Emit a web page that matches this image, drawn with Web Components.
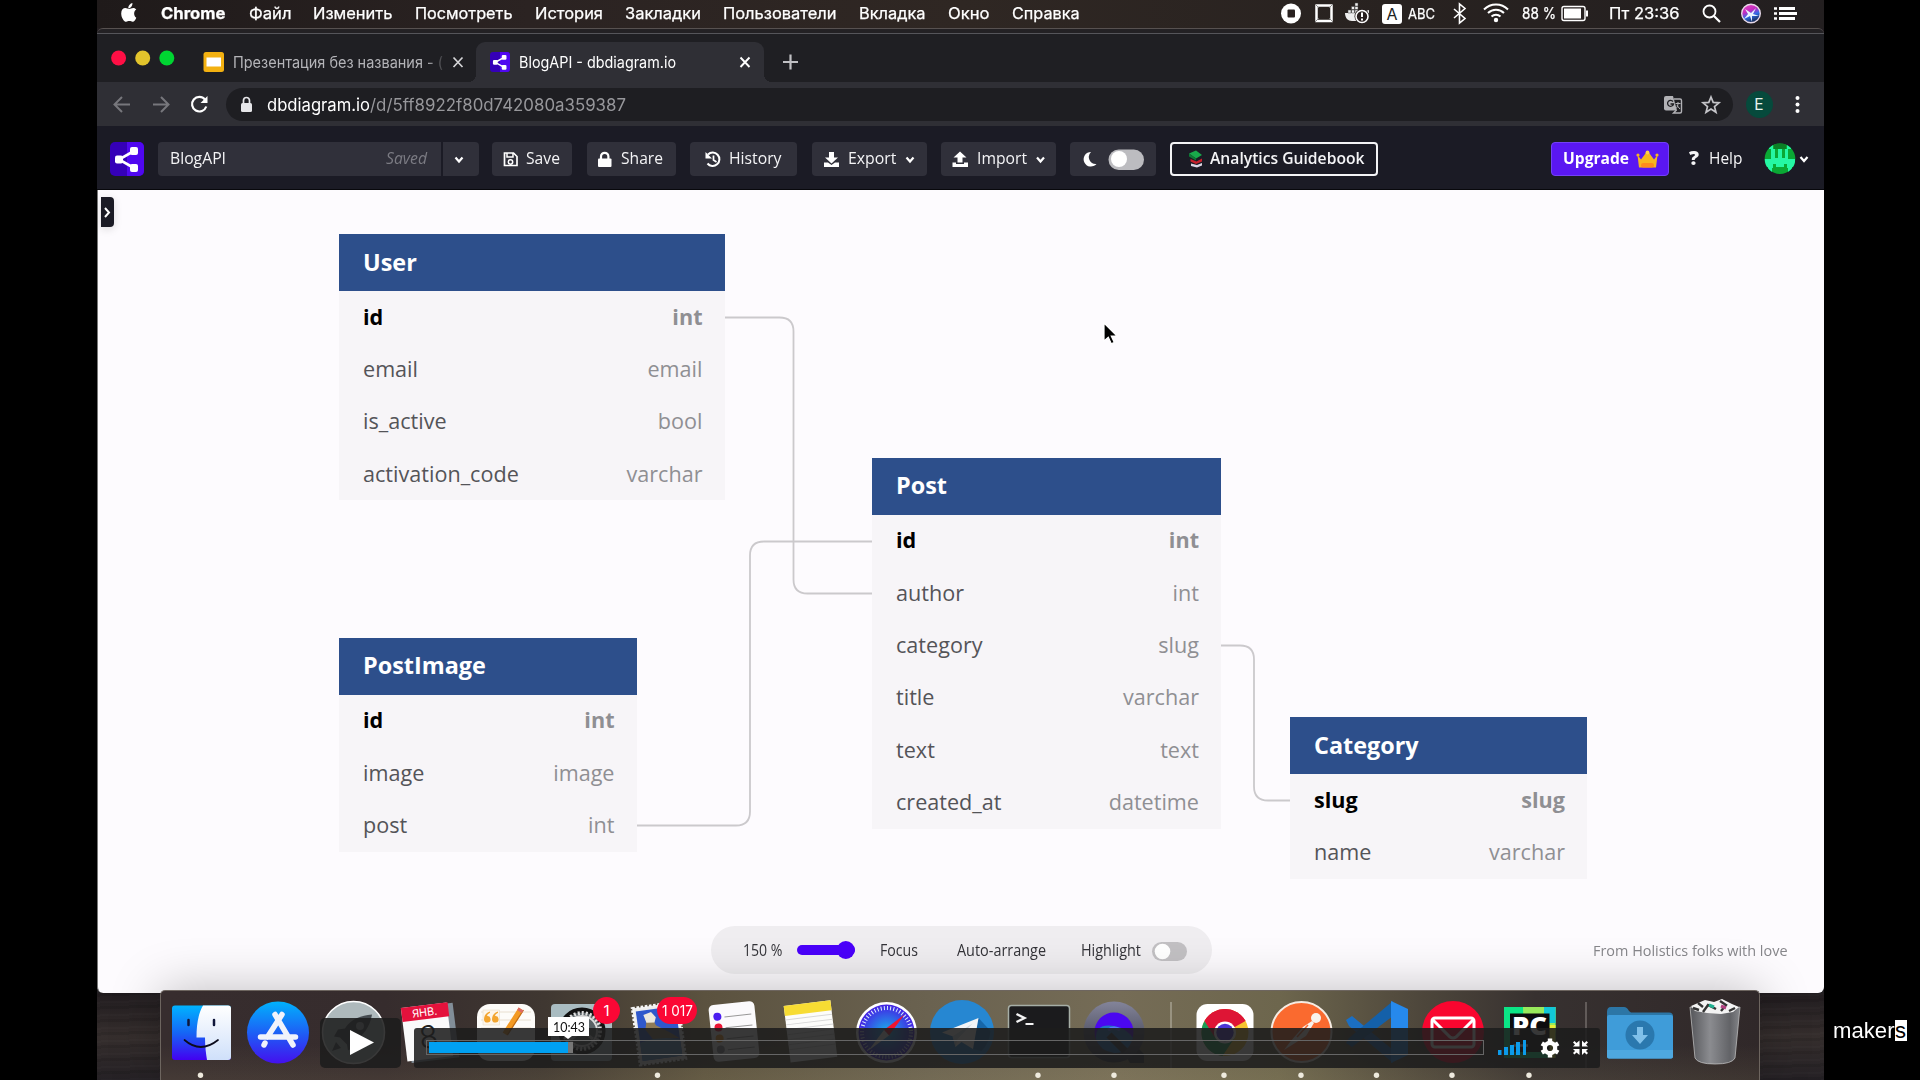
<!DOCTYPE html>
<html lang="ru">
<head>
<meta charset="utf-8">
<title>BlogAPI - dbdiagram.io</title>
<style>
html,body{margin:0;background:#000;width:1920px;height:1080px;overflow:hidden}
body{display:flex;font-family:"Open Sans","Noto Sans",sans-serif}
</style>
</head>
<body>
<mac-desktop></mac-desktop>
<side-brand></side-brand>
<script>
/* ---------- helpers ---------- */
const define = (name, css, html, after) => customElements.define(name, class extends HTMLElement {
  constructor(){ super(); this.attachShadow({mode:'open'}); }
  connectedCallback(){
    this.shadowRoot.innerHTML = `<style>:host{display:block;box-sizing:border-box}*{box-sizing:border-box}svg{display:block;flex:none}${css}</style>` + (typeof html==='function' ? html(this) : html);
    if (after) after(this);
  }
});
/* items carry their start and width; the gap to the previous item becomes a margin */
const row = (start, items) => { let c=start; return items.map(i=>{ const m=i.x-c; c=i.x+i.w; return i.html(m); }).join(''); };
const T = (x,w,text,style='') => ({x,w,html:m=>`<fit-text w="${w}" style="margin-left:${m}px;${style}">${text}</fit-text>`});
const I = (x,w,y,h,svg) => ({x,w,html:m=>`<svg style="margin-left:${m}px" width="${w}" height="${h}" viewBox="${x} ${y} ${w} ${h}">${svg}</svg>`});
const B = (x,w,cls,items) => ({x,w,html:m=>`<div class="${cls}" style="margin-left:${m}px;width:${w}px">${row(x,items)}</div>`});

/* text drawn to a set width */
define('fit-text', `:host{flex:none;white-space:nowrap}span{display:inline-block;transform-origin:0 50%}`, '<span><slot></slot></span>', el=>{
  const w=+el.getAttribute('w'); el.style.width=w+'px';
  const s=el.shadowRoot.querySelector('span'), n=s.getBoundingClientRect().width;
  if(n) s.style.transform=`scaleX(${w/n})`;
});

/* ---------- menu bar ---------- */
define('menu-bar', `
:host{height:28px;display:flex;align-items:center;color:#fff;font:400 16px Inter,Roboto,sans-serif;-webkit-text-stroke:.25px #fff;
background:linear-gradient(90deg,#1f1a1a,#2b2322 25%,#2f2723 50%,#282220 75%,#231f20)}
fit-text{margin-bottom:2px}
.kb{width:20px;height:20px;margin-bottom:1px;background:#fff;border-radius:3px;color:#222;display:flex;align-items:center;justify-content:center;font-size:16px;-webkit-text-stroke:0}`, ()=>row(97,[
 I(120,18,0,28,`<path fill="#fff" d="M132.4 3c.2 1.700-.5 3-1.300 3.900-.8.9-1.800 1.400-2.800 1.300-.1-1.300.5-2.700 1.300-3.500.8-.9 1.900-1.500 2.800-1.700zM136.300 17.800c-.8 2-2 4-3.700 4-1.200 0-1.600-.7-3.200-.7s-2 .7-3.200.7c-2 0-5-4.100-5-8.400 0-3.500 2-5.300 4.200-5.300 1.500 0 2.500.9 3.800.9 1.200 0 2.300-1 4.100-1 1.200 0 2.300.6 3 1.600-3 1.700-2.700 6.500 0 8.200z"/>`),
 T(161,64.500,'Chrome','font-weight:700'),T(248.500,42.500,'Файл'),T(313,79.500,'Изменить'),T(415,97.500,'Посмотреть'),
 T(535,68,'История'),T(625,76,'Закладки'),T(723,113.500,'Пользователи'),T(859,66.500,'Вкладка'),T(948,41.500,'Окно'),T(1011.500,67.500,'Справка'),
 I(1280,92,0,28,`<circle cx="1291" cy="13.500" r="10" fill="#fff"/><rect x="1287.500" y="9.500" width="7.500" height="8" rx="1" fill="#28201f"/>
 <rect x="1316.500" y="5.500" width="15" height="15.500" fill="none" stroke="#fff" stroke-width="2.500"/><path d="M1315 4l4 4M1333 4l-4 4M1315 22l4-4M1333 22l-4-4" stroke="#777" stroke-width=".8"/>
 <path fill="#eee" d="M1345 13h14v-2h7l3-1v3l-5 8h-12c-4 0-7-3-7-8z"/><path fill="#eee" d="M1348 10h3v3h-3zM1351.500 10h3v3h-3zM1355 10h3v3h-3zM1351.500 6.500h3v3h-3zM1355 6.500h3v3h-3zM1355 3h3v3h-3z" stroke="#444" stroke-width=".5"/>
 <circle cx="1362" cy="16.500" r="7.500" fill="#28201f" /><circle cx="1362" cy="16.500" r="6" fill="none" stroke="#fff" stroke-width="1.600"/><path d="M1362 12.500v4.500M1362 18.500v2" stroke="#fff" stroke-width="2"/>`),
 {x:1382,w:20,html:m=>`<div class="kb" style="margin-left:${m}px">A</div>`},
 T(1408,27,'ABC','font-size:14px'),
 I(1452,58,0,28,`<path d="M1454 9l11 9.500-5.500 4.500V4l5.500 4.500-11 9.500" fill="none" stroke="#fff" stroke-width="1.600"/>
 <g fill="none" stroke="#fff" stroke-width="2"><path d="M1484 9.500a17 17 0 0 1 24 0M1488 13a11.500 11.500 0 0 1 16 0M1491.500 16.500a6.500 6.500 0 0 1 9 0"/></g><circle cx="1496" cy="20" r="2.200" fill="#fff"/>`),
 T(1522,34,'88 %','font-size:15.500px'),
 I(1560,30,0,28,`<rect x="1562" y="6.500" width="23" height="14" rx="2" fill="none" stroke="#fff" stroke-width="1.400"/><rect x="1564" y="8.500" width="17" height="10" fill="#fff"/><path d="M1587 10.500v6" stroke="#fff" stroke-width="2"/>`),
 T(1608.500,70.500,'Пт 23:36'),
 I(1700,100,0,28,`<circle cx="1709.500" cy="11.500" r="6" fill="none" stroke="#fff" stroke-width="1.800"/><path d="M1714 16l6 6" stroke="#fff" stroke-width="2.200"/>
 <defs><linearGradient id="si" x2=".4" y2="1"><stop offset="0" stop-color="#f04bc0"/><stop offset=".45" stop-color="#c02bc0"/><stop offset=".7" stop-color="#2f6de8"/><stop offset="1" stop-color="#173060"/></linearGradient></defs>
 <circle cx="1751" cy="13.500" r="9.300" fill="url(#si)" stroke="#e7d8e8" stroke-width="1.400"/><path d="M1745 9l6 4 5-5-3 6 6 2-7 0 0 6-2-6-6 3 4-5z" fill="#e8f4ff"/>
 <path d="M1779 8.500h16M1779 13.500h18M1779 18.500h16" stroke="#fff" stroke-width="2.800"/><path d="M1774 8.500h3M1774 13.500h3M1774 18.500h3" stroke="#fff" stroke-width="2.500"/>`)
]));

/* ---------- browser chrome ---------- */
const logo = (x,y,w,h)=>`<svg x="${x}" y="${y}" width="${w}" height="${h}" viewBox="0 0 34 34" preserveAspectRatio="none"><rect width="34" height="34" rx="5" fill="#3500b8"/><path d="M17 0h12a5 5 0 0 1 5 5v24a5 5 0 0 1-5 5H17z" fill="#5008f0"/><path d="M24 9L9 17.500 24 26" fill="none" stroke="#fff" stroke-width="2.600"/><rect x="20" y="5" width="8" height="8" rx="2" fill="#fff"/><rect x="20" y="22" width="8" height="8" rx="2" fill="#fff"/><rect x="5" y="13.500" width="8" height="8" rx="2" fill="#fff"/></svg>`;
define('tab-strip', `
:host{height:49px;display:flex;align-items:flex-start;background:#1f1f23;border-top:1px solid #55555a;color:#fff;font:400 15.500px Inter,Roboto,sans-serif}
.r{display:flex;height:40px;align-items:center;margin-top:8px}
.fade{color:#b4b4b8;-webkit-mask:linear-gradient(90deg,#000 92%,#0003);mask:linear-gradient(90deg,#000 92%,#0003)}
.act{display:flex;align-items:center;height:40px;background:#2f2f35;border-radius:9px 9px 0 0;position:relative}
.act:before,.act:after{content:"";position:absolute;bottom:0;width:8px;height:8px}
.act:before{left:-8px;background:radial-gradient(circle at 0 0,transparent 8px,#2f2f35 8px)}
.act:after{right:-8px;background:radial-gradient(circle at 100% 0,transparent 8px,#2f2f35 8px)}`,
()=>`<div class="r">`+row(97,[
 I(108,70,39,40,`<circle cx="118.600" cy="55" r="7.500" fill="#ff0f45"/><circle cx="142.700" cy="55" r="7.500" fill="#e2c42c"/><circle cx="166.800" cy="55" r="7.500" fill="#00d532"/>`),
 I(203,22,42,40,`<rect x="203.500" y="52" width="20.500" height="20" rx="2.500" fill="#f3b111"/><rect x="206.500" y="57.500" width="14.500" height="9" fill="#fff"/>`),
 {x:232.500,w:210,html:m=>`<fit-text class="fade" w="210" style="margin-left:${m}px">Презентация без названия - (</fit-text>`},
 I(450,16,42,40,`<path d="M453.500 57.500l9 9.500M462.500 57.500l-9 9.500" stroke="#d5d5d8" stroke-width="1.700"/>`),
 B(476,288,'act',[
  I(490,20,42,40,logo(490,52,20,20)),
  T(519,157,'BlogAPI - dbdiagram.io'),
  I(737,16,42,40,`<path d="M740.500 57.500l9 9.500M749.500 57.500l-9 9.500" stroke="#fff" stroke-width="1.900"/>`)]),
 I(782,17,42,40,`<path d="M783 62h15M790.500 54.500v15" stroke="#c0c0c4" stroke-width="2.200"/>`)
])+`</div>`);

define('address-row', `
:host{height:44px;display:flex;align-items:center;background:#2f2f35;font:400 17px Inter,Roboto,sans-serif}
.pill{height:33px;border-radius:17px;background:#1e1e22;display:flex;align-items:center;margin-bottom:-1px}
.av{width:27px;height:27px;border-radius:50%;background:#064a3c;color:#e8f4ee;font-size:15.500px;display:flex;align-items:center;justify-content:center}`,
()=>row(97,[
 I(112,100,82,44,`<g fill="none" stroke-width="2" stroke="#77777c"><path d="M130 104.500h-15M122 97l-7.500 7.500 7.500 7.500M153 104.500h15M161 97l7.500 7.500-7.500 7.500"/><path stroke="#fff" stroke-width="2.200" d="M205 99.500a7.300 7.300 0 1 0 1.300 7"/></g><path d="M207.500 96v7h-7z" fill="#fff"/>`),
 B(226,1506.500,'pill',[
  I(240,14,88,33,`<rect x="241" y="103" width="11" height="9" rx="1.500" fill="#e6e6e9"/><path d="M243.500 103v-2.500a3 3 0 0 1 6 0v2.500" fill="none" stroke="#e6e6e9" stroke-width="1.700"/>`),
  T(266.500,103,'dbdiagram.io','color:#fff'),T(370,256,'/d/5ff8922f80d742080a359387','color:#97979b'),
  I(1662,60,88,33,`<path d="M1666 96h7l4 14.500h-11a2 2 0 0 1-2-2V98a2 2 0 0 1 2-2z" fill="#b2b2b6"/><path d="M1674 99h6a1.500 1.500 0 0 1 1.500 1.500v11a1.500 1.500 0 0 1-1.500 1.500h-6.500l3-3" fill="none" stroke="#b2b2b6" stroke-width="1.400"/><path d="M1673 101.500a3 3 0 1 0 .5 2.500h-3" fill="none" stroke="#1e1e22" stroke-width="1.300"/><path d="M1675.500 103.500h5M1678 102v1.500c0 2-1 4-2 5M1677 105.500l3 3.500" fill="none" stroke="#b2b2b6" stroke-width="1"/>
  <path d="M1711 97l2.200 5.400 5.800.4-4.500 3.800 1.500 5.700-5-3.200-5 3.200 1.500-5.700-4.500-3.800 5.800-.4z" fill="none" stroke="#c4c4c8" stroke-width="1.700"/>`)]),
 {x:1745.500,w:27,html:m=>`<div class="av" style="margin-left:${m}px">E</div>`},
 I(1793,10,82,44,`<g fill="#fff"><circle cx="1797.500" cy="98" r="2"/><circle cx="1797.500" cy="104.500" r="2"/><circle cx="1797.500" cy="111" r="2"/></g>`)
]));

/* ---------- dbdiagram header ---------- */
const chev=(x,y)=>`<path d="M${x-3.500} ${y-2}l3.500 4 3.500-4" fill="none" stroke="#fff" stroke-width="2.200"/>`;
define('app-header', `
:host{height:64px;display:flex;align-items:center;background:#1b1b25;border-bottom:1px solid #08080c;color:#f4f4f6;font:500 15.500px "Open Sans",sans-serif;padding-top:2px}
.b{height:34px;border-radius:4px;background:#30303a;display:flex;align-items:center}
.b>fit-text,:host>fit-text{margin-bottom:1px}
.l{border-radius:4px 0 0 4px}.rr{border-radius:0 4px 4px 0}
.o{background:none;border:2px solid #f4f4f6}
.o>*:first-child{margin-left:16px!important}
.u{background:#5a17f2;border:1px solid #7341f5}`,
()=>row(97,[
 I(110,34,142,34,logo(110,142,34,34)),
 B(158,282.500,'b l',[T(169.500,56,'BlogAPI'),T(386,41,'Saved','font-style:italic;font-weight:400;color:#7b7b83')]),
 B(442.500,36,'b rr',[I(449,20,142,34,chev(459,159.500))]),
 B(492,80,'b',[I(502,18,142,34,`<path d="M504.500 153h9l3.500 3.500v9h-12.500z" fill="none" stroke="#fff" stroke-width="1.700"/><path d="M507 153v4h6v-4" fill="none" stroke="#fff" stroke-width="1.500"/><circle cx="510.500" cy="162" r="2.200" fill="none" stroke="#fff" stroke-width="1.500"/>`),T(526,34,'Save')]),
 B(587,89,'b',[I(597,16,142,34,`<rect x="598" y="158.500" width="13.500" height="8.500" rx="1" fill="#fff"/><path d="M601 159v-2.500a3.700 3.700 0 0 1 7.400 0v2.500" fill="none" stroke="#fff" stroke-width="2.200"/>`),T(621,42,'Share')]),
 B(690,107,'b',[I(704,18,142,34,`<path d="M708 154.500a6.700 6.700 0 1 1-.5 9" fill="none" stroke="#fff" stroke-width="2"/><path d="M705.500 152v6.500h6.500z" fill="#fff"/><path d="M713.500 155.500v4.500l3 2" fill="none" stroke="#fff" stroke-width="1.700"/>`),T(729,52.500,'History')]),
 B(812,114.500,'b',[I(823,17,142,34,`<path d="M829 152h5v5.500h4l-6.500 6-6.500-6h4z" fill="#fff"/><path d="M824 162.500h4l3.500 2.500 3.500-2.500h4v4.500h-15z" fill="#fff"/>`),T(848,48.500,'Export'),I(902,16,142,34,chev(910,159.500))]),
 B(941,115,'b',[I(952,17,142,34,`<path d="M957.500 162.500h5v-5h4l-6.500-6-6.500 6h4z" fill="#fff"/><path d="M952.500 162.500h3.500v1.500h8v-1.500h4v4.500h-15.500z" fill="#fff"/>`),T(976.500,50,'Import'),I(1032,16,142,34,chev(1040.500,159.500))]),
 B(1070,86,'b',[I(1080,70,142,34,`<path d="M1091 152a7.300 7.300 0 1 0 5.500 12a7 7 0 0 1-5.500-12z" fill="#fff"/><rect x="1108.500" y="149.500" width="35.500" height="20.500" rx="10.200" fill="#bcbcc0"/><circle cx="1119" cy="159" r="8" fill="#fff"/>`)]),
 {x:1170,w:208,html:m=>`<div class="b o" style="margin-left:${m}px;width:208px">`+row(1188,[
   I(1188,16,144,30,`<path d="M1189 153.500l7-3 6 4.500-6 3.500z" fill="#19a84b"/><path d="M1189 153.500l7 5v2l-7-4z" fill="#0c7a34"/><path d="M1190.500 159l6 2.500 5.500-3v3l-6 2.500-5.500-2.500z" fill="#c8202c"/><path d="M1191 163.500l6 1.500 5-2v2.500l-5 2-6-1.500z" fill="#dcd6e4"/>`),
   T(1210,154.500,'Analytics Guidebook','font-weight:600')])+`</div>`},
 B(1551,118,'b u',[T(1562,66,'Upgrade','font-weight:700;color:#fff'),
   I(1634,24,142,34,`<path d="M1636.500 155l3.500 4.500 3-4 3-4.500 1 0 3 4.500 3 4 3.500-4.500-1.500 12.500h-17z" fill="#f8b61e"/><circle cx="1637" cy="155" r="1.600" fill="#f8b61e"/><circle cx="1656" cy="155" r="1.600" fill="#f8b61e"/><circle cx="1646.500" cy="152.500" r="1.900" fill="#ffd04a"/><rect x="1640" y="163" width="13" height="4.500" rx="2.200" fill="#ff8a1c"/>`)]),
 T(1688.500,10,'?','font:800 19px Open Sans,sans-serif'),T(1708.500,33.500,'Help'),
 I(1764,46,142,32,`<clipPath id="av"><circle cx="1780" cy="157.800" r="15.300"/></clipPath><g clip-path="url(#av)"><rect x="1764" y="142" width="32" height="32" fill="#0aa834"/><path fill="#0b7f26" d="M1774 142h12v6h-12z"/><path fill="#25f7a4" d="M1769 144h4v4h2v9h3v-9h4v9h3v-9h2v-4h4v4h-3v10h7v8h-3v5h-4v-4h-16v4h-4v-5h-4v-8h7v-10h-2z"/><path fill="#0aa834" d="M1773 163h3v3h8v-3h3v5h-14z"/></g>${chev(1804,158)}`)
]));

/* ---------- diagram ---------- */
define('db-table', `
:host{position:absolute;background:#f7f5f8;font:400 21.600px "Open Sans",sans-serif}
h3{margin:0;height:57px;padding:0 24px 2px;display:flex;align-items:center;background:#2d4f8b;color:#fff;font:700 23.400px "Open Sans",sans-serif}
.f{height:52.350px;padding:0 22px 2px 24px;display:flex;align-items:center;justify-content:space-between;color:#545458}
.f b{font-weight:400;color:#8f8f93}
.f.k{font-weight:700;color:#000}.f.k b{font-weight:700}`,
el=>`<h3>${el.getAttribute('name')}</h3>`+el.getAttribute('fields').split(',').map((f,i)=>{const [a,b]=f.split(':');return `<div class="f${i?'':' k'}"><span>${a}</span><b>${b}</b></div>`}).join(''),
el=>{ el.style.cssText=`left:${el.getAttribute('x')-97}px;top:${el.getAttribute('y')-190}px;width:${el.getAttribute('w')}px`; });

define('view-controls', `
:host{position:absolute;left:613.500px;top:736px;width:501.500px;height:48px;border-radius:24px;background:#efedf0;display:flex;align-items:center;color:#333338;font:400 15.500px "Open Sans",sans-serif}
fit-text{margin-bottom:1px}`,
()=>row(710.500,[T(743,39.500,'150 %'),I(795,62,926,48,`<rect x="797" y="945" width="58" height="10" rx="5" fill="#4a00fa"/><circle cx="845.800" cy="950" r="9" fill="#4a00fa"/>`),
 T(880,38,'Focus'),T(956.500,89,'Auto-arrange'),T(1081,60,'Highlight'),
 I(1150,40,926,48,`<rect x="1152" y="942" width="35" height="19" rx="9.500" fill="#c2c0c3"/><circle cx="1162.500" cy="951.500" r="7.800" fill="#fff"/>`)]));

define('diagram-canvas', `
:host{height:803px;background:#fdfbfe;position:relative;border-radius:0 0 6px 6px;overflow:hidden;border-left:1px solid #777}
.wires{position:absolute;left:-1px;top:0}
.layer{position:absolute;left:-1px;top:0;width:1727px;height:803px}
.exp{position:absolute;left:4px;top:7px;width:13px;height:30px;background:#1b1b25;border-radius:0 4px 4px 0;box-shadow:0 2px 8px #0002}
.by{position:absolute;right:36.500px;top:750px;color:#87878b;font:400 15px "Open Sans",sans-serif}
.cur{position:absolute;left:1001.500px;top:128.500px}`,
`<div class="layer"><svg class="wires" style="left:0" width="1727" height="803" viewBox="97 190 1727 803"><g fill="none" stroke="#cbc9cc" stroke-width="1.800">
<path d="M724 317.500h55.500q14 0 14 14v248q0 14 14 14h65"/><path d="M873 541.500h-109q-14 0-14 14v256q0 14-14 14h-100"/><path d="M1221 645.500h19q14 0 14 14v127q0 14 14 14h22"/></g></svg>
<db-table name="User" x="339" y="234" w="385.500" fields="id:int,email:email,is_active:bool,activation_code:varchar"></db-table>
<db-table name="Post" x="872" y="457.500" w="349" fields="id:int,author:int,category:slug,title:varchar,text:text,created_at:datetime"></db-table>
<db-table name="PostImage" x="339" y="637.500" w="297.500" fields="id:int,image:image,post:int"></db-table>
<db-table name="Category" x="1290" y="717" w="297" fields="slug:slug,name:varchar"></db-table>
<div class="exp"><svg width="13" height="30"><path d="M4 11l4 4.500-4 4.500" fill="none" stroke="#fff" stroke-width="2"/></svg></div>
<view-controls></view-controls>
<fit-text class="by" w="194.500">From Holistics folks with love</fit-text>
<svg class="cur" width="22" height="30" viewBox="1099 319 22 30"><path d="M1104 323v18l4.300-3.800 3 6.500 3-1.300-3-6.300h5.700z" fill="#000" stroke="#fff" stroke-width="1.200"/></svg></div>`);

/* ---------- dock ---------- */
const ART = {
finder:`<defs><linearGradient id="f" x2="0" y2="1"><stop offset="0" stop-color="#00b4ff"/><stop offset=".5" stop-color="#1566f5"/><stop offset="1" stop-color="#4300f0"/></linearGradient><linearGradient id="f2" x2="0" y2="1"><stop offset="0" stop-color="#fff"/><stop offset="1" stop-color="#cfe0fa"/></linearGradient></defs><rect x="173" y="1005.500" width="59" height="54.500" rx="3" fill="url(#f)"/><path d="M204 1005.500h25a3 3 0 0 1 3 3v48.500a3 3 0 0 1-3 3h-21c-1-6-2-13-2-22.500h-8.500c0-14 2-24 6.500-32z" fill="url(#f2)"/><path d="M189.500 1020v5M215 1020v5" stroke="#10163a" stroke-width="2.500" stroke-linecap="round"/><path d="M185.500 1040q16 14 33.500 0" fill="none" stroke="#0c0c1c" stroke-width="1.700" stroke-linecap="round"/>`,
store:`<defs><linearGradient id="s" x2="0" y2="1"><stop offset="0" stop-color="#00b2fc"/><stop offset=".55" stop-color="#2058f5"/><stop offset="1" stop-color="#4410ee"/></linearGradient></defs><circle cx="279" cy="1032.500" r="31" fill="url(#s)"/><g stroke="#f1f3fb" stroke-width="5.500" stroke-linecap="round"><path d="M276 1014.500l18 30.500M283 1014.500l-14.500 22.500M266 1043l-1 2M261.500 1037h35"/></g>`,
launch:`<circle cx="354.500" cy="1032.500" r="31" fill="#aeb9bc" stroke="#fff" stroke-width="1.500"/><path d="M373 1014.500c-13 1-22 6-27 14l-7 1-4 7 6 1 7 7 1 6 7-4 1-7c8-5 14-13 16-25zM337 1042l-4 9 9-3z" fill="#454b50"/><circle cx="361" cy="1026" r="4" fill="#a5aeb2"/>`,
cal:`<g transform="rotate(-7 428 1032)"><rect x="409" y="1006" width="48" height="55" fill="#828e98"/><rect x="405" y="1005" width="46" height="54" fill="#fafafa"/><rect x="405" y="1005" width="47" height="14" fill="#e4123c"/><text x="428" y="1016" text-anchor="middle" font-family="Inter" font-size="11" textLength="25" lengthAdjust="spacingAndGlyphs" fill="#fff">ЯНВ.</text><text x="429" y="1048" text-anchor="middle" font-family="Inter" font-size="31" font-weight="300" fill="#222">8</text></g>`,
pages:`<rect x="478" y="1004" width="58" height="57" rx="13" fill="#fdfcf9"/><path d="M482 1012h50M482 1020h50M482 1028h50" stroke="#e8dfd0"/><rect x="484" y="1010" width="16.500" height="15" fill="#fdf6ea" stroke="#eadcc6" stroke-width=".6"/><path d="M491 1011.500q-6 2-6 8a3.300 3.300 0 1 0 3-3.500q0-2 3-3.300zM499 1011.500q-6 2-6 8a3.300 3.300 0 1 0 3-3.500q0-2 3-3.300z" fill="#f3a52e"/><path d="M522 1009l-16 25" stroke="#f39a23" stroke-width="5.500"/><path d="M524.500 1010l-16 25" stroke="#c06a10" stroke-width="1.200"/><path d="M522 1009l-1.500 2.500" stroke="#dc6a66" stroke-width="5.500"/>`,
settings:`<rect x="552" y="1004" width="61" height="57" rx="4" fill="#a9bcc1"/><circle cx="583" cy="1031" r="21" fill="#5f676b" stroke="#111" stroke-width="5"/><circle cx="583" cy="1031" r="18" fill="none" stroke="#dedede" stroke-width="4" stroke-dasharray="2 2"/><circle cx="583" cy="1031" r="15" fill="#5a6265" stroke="#ddd" stroke-width="2"/><path d="M583 1031v-13M583 1031l11 8M583 1031l-11 8" stroke="#bbb" stroke-width="3"/>`,
stamp:`<g transform="rotate(-8 660 1033)"><rect x="637" y="1005" width="46" height="57" fill="#eee" stroke="#f5f5f5" stroke-width="3" stroke-dasharray="2.600 1.600"/><rect x="640" y="1008.500" width="40" height="50" fill="#2f58cc"/><path d="M640 1040l20-3 20 5v16.500h-40z" fill="#5c91c4"/><path d="M648 1013l7 3 3 9 13 9 9 7-14-2-13-1-6-10 2-8z" fill="#8f7b58"/><path d="M647 1013l8-2 4 6-2 5-8-1z" fill="#ece8dd"/></g>`,
remind:`<g transform="rotate(-6 735 1031.500)"><rect x="712" y="1003" width="46" height="57" rx="5" fill="#fbfafc"/><g stroke="#999" stroke-width="1"><path d="M727 1016h27M727 1027h27M727 1038h27M727 1049h27"/></g><circle cx="720" cy="1015" r="4" fill="#4b1df0"/><circle cx="720" cy="1026" r="4" fill="#ea1535"/><circle cx="720" cy="1037" r="4" fill="#f09018"/><circle cx="720" cy="1048" r="4" fill="#8b8b90"/></g>`,
notes:`<g transform="rotate(-7 811 1031.500)"><rect x="788" y="1003" width="47" height="57" fill="#fcfcfa"/><rect x="788" y="1003" width="47" height="10" fill="#f7dc33"/><path d="M788 1017h47M788 1022h47M788 1027h47M788 1032h47M788 1037h47M788 1042h47M788 1047h47" stroke="#d7d7d7"/></g>`,
safari:`<defs><radialGradient id="sf"><stop offset="0" stop-color="#19b4ea"/><stop offset="1" stop-color="#4422e4"/></radialGradient></defs><circle cx="887.500" cy="1032.500" r="30.500" fill="#fff"/><circle cx="887.500" cy="1032.500" r="28" fill="url(#sf)"/><circle cx="887.500" cy="1032.500" r="24.500" fill="none" stroke="#dcecff" stroke-width="4" stroke-dasharray="1 2.200"/><path d="M905.500 1014.500l-15.500 21-5-5.500z" fill="#f01430"/><path d="M869.500 1050.500l15.500-20.500 5 5.500z" fill="#eee"/>`,
tele:`<circle cx="963" cy="1032" r="32" fill="#2687d2"/><path d="M979.500 1018l12 13q-1 12-9 20l-9-2z" fill="#1766a8"/><path d="M943 1032.500l36.500-14.500-5.500 31-11.500-7-6 5-2.500-10.500z" fill="#f3f4f6"/><path d="M953.500 1036.500l20-13-15 15.500-2 8z" fill="#ccd8e3"/>`,
term:`<rect x="1009.500" y="1005.500" width="61" height="52" rx="3" fill="#1b1b1d" stroke="#a6aea6" stroke-width="1.500"/><path d="M1017.500 1014l8 4-8 4" fill="none" stroke="#f4f4f4" stroke-width="2.400"/><path d="M1026.500 1024h8" stroke="#f4f4f4" stroke-width="2"/>`,
qt:`<defs><linearGradient id="q" x2="0" y2="1"><stop offset="0" stop-color="#83849a"/><stop offset="1" stop-color="#31323e"/></linearGradient></defs><path d="M1117 1040h14l14 14v9h-14z" fill="#34343c"/><circle cx="1115" cy="1032" r="30.500" fill="url(#q)"/><circle cx="1115" cy="1032" r="19.500" fill="#4b07f0"/><path d="M1097 1039q-1-16 18-13q12 2 19 12q-5 16-19 15q-14-2-18-14z" fill="#2272c0"/><path d="M1110 1035l16 16" stroke="#30303a" stroke-width="7"/><path d="M1109 1030q6-4 12 0" stroke="#5a74ff" stroke-width="3" fill="none"/>`,
div1:`<path d="M1172 1002v66" stroke="#a39e8d" stroke-width="1.600"/>`,
chrome:`<rect x="1197.500" y="1004" width="57" height="57" rx="11" fill="#fff"/><circle cx="1226" cy="1032.500" r="23.500" fill="#f5c430"/><path d="M1226 1032.500L1205.500 1021a23.500 23.500 0 0 1 41 0z" fill="#de1535"/><path d="M1226 1032.500h-10L1205.500 1021a23.500 23.500 0 0 0 18 35l12-18z" fill="#1c9c55"/><path d="M1226 1021h20.500a23.500 23.500 0 0 0-41 0l10 16z" fill="#de1535"/><circle cx="1226" cy="1032.500" r="11" fill="#fff"/><circle cx="1226" cy="1032.500" r="8.700" fill="#4b35d4"/>`,
postman:`<circle cx="1302.500" cy="1032" r="30" fill="#fa6a2f" stroke="#f6ece3" stroke-width="2"/><circle cx="1317" cy="1018" r="5" fill="#f8f2ec"/><path d="M1313 1021l-9 6-13 15-6 8 8-5 14-9 8-13z" fill="#f8f2ec"/><path d="M1309 1025l-11 12" stroke="#fa6a2f" stroke-width="1.500"/>`,
code:`<path d="M1347 1020l6-4 41 34v13l-44-37z" fill="#1b6fc3"/><path d="M1347 1043l6 4 41-31v-15l-44 37z" fill="#1460a9"/><path d="M1392 1001l17 8v46l-17 8z" fill="#2689ec"/>`,
mailr:`<circle cx="1454" cy="1032" r="31" fill="#f9062f"/><rect x="1433" y="1018" width="42" height="29" rx="3" fill="none" stroke="#fff" stroke-width="3"/><path d="M1434 1020l17 17q3 2 6 0l17-17" fill="none" stroke="#fff" stroke-width="3"/>`,
pc:`<rect x="1505" y="1007" width="51.500" height="51" fill="#0be586"/><path d="M1524 1007h32.500v26l-8-8h-24z" fill="#98ea5c"/><path d="M1545 1007h11.500v16h-11.500z" fill="#12c8d8"/><path d="M1550 1025h6.500v33h-6.500z" fill="#e8ee38"/><rect x="1511" y="1013.500" width="39.500" height="38.500" fill="#0c0c0e"/><text x="1513" y="1035" font-family="Open Sans" font-weight="800" font-size="25" textLength="35" lengthAdjust="spacingAndGlyphs" fill="#fff">PC</text><path d="M1514 1045.500h15" stroke="#fff" stroke-width="2.500"/>`,
div2:`<path d="M1587 1002v66" stroke="#6e6765" stroke-width="1.600"/>`,
folder:`<path d="M1608 1012q0-5 4-5h13q3 0 5 4l2 1.500h38q4 0 4 4v12h-66z" fill="#2c76a6"/><rect x="1608" y="1015" width="66" height="43.500" rx="2" fill="#3f9cd9"/><path d="M1608 1050h66v6.500a2 2 0 0 1-2 2h-62a2 2 0 0 1-2-2z" fill="#4ea8df"/><circle cx="1641" cy="1035" r="14.500" fill="#2a78ae"/><path d="M1638 1027h6v8h5l-8 9-8-9h5z" fill="#7fc0ea"/>`,
trash:`<defs><linearGradient id="tr"><stop offset="0" stop-color="#55565a"/><stop offset=".4" stop-color="#8b8c90"/><stop offset=".8" stop-color="#626367"/><stop offset="1" stop-color="#85868a"/></linearGradient></defs><path d="M1691 1007q25 9 50 0l-5 51q-3 6-20 6t-20-6z" fill="url(#tr)" stroke="#bbb" stroke-width=".8"/><path d="M1692 1006l14-6 9 2 8-3 10 5 7 3-6 5-12 2-14-1-12-2z" fill="#f3f3f3"/><path d="M1699 1003l5 4M1704 1012l5-7 8 4M1721 1001l6 4-5 6M1730 1011l6-3M1694 1008l6 2" stroke="#333" stroke-width="2.400" fill="none"/><path d="M1710 1005l5 2" stroke="#20b090" stroke-width="3"/><path d="M1722 1006l5 2" stroke="#b04080" stroke-width="3"/>`
};
const CELLS=[['finder',165,240],['store',240,316],['launch',316,392],['cal',392,468],['pages',468,544],['settings',544,624],['stamp',624,700],['remind',700,774],['notes',774,850],['safari',850,925],['tele',925,1002],['term',1002,1077],['qt',1077,1160],['div1',1160,1188],['chrome',1188,1264],['postman',1264,1340],['code',1340,1416],['mailr',1416,1492],['pc',1492,1570],['div2',1570,1600],['folder',1600,1682],['trash',1682,1750]];
const DOTS={finder:201.5,stamp:658.5,term:1039,qt:1115,chrome:1225,postman:1302,code:1377.5,mailr:1453,pc:1530};
define('dock-icon',`:host{flex:none}`,el=>{const n=el.getAttribute('name'),a=+el.getAttribute('from'),w=el.getAttribute('to')-a;
 return `<svg width="${w}" height="90" viewBox="${a} 991 ${w} 90">${ART[n]}${DOTS[n]?`<circle cx="${DOTS[n]}" cy="1075.300" r="2.700" fill="#eeeade"/>`:''}</svg>`});
define('dock-badge',`:host{position:absolute;background:#fb0735;color:#fff;border-radius:14px;height:27px;display:flex;align-items:center;justify-content:center;font:400 15px Inter,sans-serif}`,'<slot></slot>');
define('mac-dock',`
:host{margin:-3px 0 0 63px;width:1600px;height:90px;position:relative;display:flex;padding-left:3px;border-radius:5px 5px 0 0;border:1px solid #6d655f;border-bottom:0;
background:linear-gradient(180deg,transparent 60%,#c8ba8018),linear-gradient(90deg,#372d2e 0,#362c2d 14%,#3f3731 24%,#5b523f 34%,#6a6250 48%,#756c56 60%,#6d664d 70%,#4d463b 79%,#373130 86%,#302829);box-shadow:0 0 50px rgba(0,0,0,.25)}
svg{display:block}`,
CELLS.map(c=>`<dock-icon name="${c[0]}" from="${c[1]}" to="${c[2]}"></dock-icon>`).join('')+
`<dock-badge style="left:432px;top:6px;width:27px">1</dock-badge><dock-badge style="left:496px;top:6px;width:40px"><fit-text w="31">1 017</fit-text></dock-badge>`);

/* ---------- player overlay ---------- */
define('video-controls',`
:host{position:absolute;left:320px;top:1017px;display:flex;gap:13px;align-items:flex-start}
.play{width:81px;height:50px;margin-top:1px;border-radius:5px;background:rgba(28,28,28,.88)}
.bar{width:1186px;height:40px;margin-top:11px;border-radius:3px;background:rgba(28,28,28,.88);display:flex;align-items:center;padding-left:12px}
.track{width:1058px;height:15px;border:1px solid #666;display:flex;padding:1px 2px;margin-top:-1px}
.track i{width:139px;background:#00a0f2}.track u{width:5px;background:#777}
.tip{position:absolute;left:228px;top:0;width:41px;height:19px;background:#fff;color:#111;font:400 13px Lato,"Open Sans",sans-serif;display:flex;align-items:center;justify-content:center}
.tip:after{content:"";position:absolute;left:16px;top:19px;border:4.500px solid transparent;border-top:3.500px solid #fff;border-bottom:0}`,
`<div class="play"><svg width="81" height="50" viewBox="320 1018 81 50"><path d="M350 1030v25l24-12.500z" fill="#fff"/></svg></div>
<div class="bar"><div class="track"><i></i><u></u></div>
<svg width="110" height="40" viewBox="1484 1028 110 40"><g fill="#0c9bea"><path d="M1498 1050h3.500v5h-3.500zM1504 1047h4v8h-4zM1510 1045h4v10h-4zM1516 1042h4v13h-4zM1523 1040h3v15h-3z"/></g>
<g transform="translate(1550 1048)"><circle r="5.200" fill="none" stroke="#fff" stroke-width="4.200"/><g stroke="#fff" stroke-width="4.400"><path d="M0-9.500v4M0 9.500v-4M-8.200-4.700l3.400 2M8.200 4.700l-3.400-2M8.200-4.700l-3.400 2M-8.200 4.700l3.400-2"/></g></g>
<g fill="#fff"><path d="M1579.500 1040.500v6h-6.500l2-2-2-2 1.500-1.500 2 2zM1582 1040.500v6h6l-2-2 2-2-1.500-1.500-2 2zM1579.500 1055v-6h-6.500l2 2-2 2 1.500 1.500 2-2zM1582 1055v-6h6l-2 2 2 2-1.500 1.500-2-2z"/></g></svg></div>
<div class="tip"><fit-text w="32">10:43</fit-text></div>`);

/* ---------- desktop ---------- */
define('browser-window',`:host{height:965px;border-top:1px solid #575150;padding-top:4px;background:#232124;border-radius:6px 6px 0 0}`,
`<tab-strip></tab-strip><address-row></address-row><app-header></app-header><diagram-canvas></diagram-canvas>`);
define('mac-desktop',`
:host{flex:none;margin-left:97px;width:1727px;height:1080px;display:flex;flex-direction:column;
background:repeating-linear-gradient(178deg,#ffffff04 0 2px,transparent 2px 5px,#00000018 5px 8px,transparent 8px 13px),linear-gradient(180deg,#221d20 0,#221d20 92%,#352e2d 96%,#252125)}
menu-bar,browser-window,mac-dock{flex:none}`,
`<menu-bar></menu-bar><browser-window></browser-window><mac-dock></mac-dock><video-controls></video-controls>`);
define('side-brand',`
:host{width:96px;height:1080px;display:flex;align-items:flex-start;padding:1018px 0 0 8.500px;color:#fff;font:400 22px/25px "Liberation Sans",Arial,sans-serif}
.s{background:linear-gradient(#fff,#fff) 0 2px/12px 21px no-repeat;color:#000;width:12px;height:25px;margin-left:1px;display:block}`,
`<fit-text w="61.500">maker</fit-text><span class="s">s</span>`);
</script>
</body>
</html>
